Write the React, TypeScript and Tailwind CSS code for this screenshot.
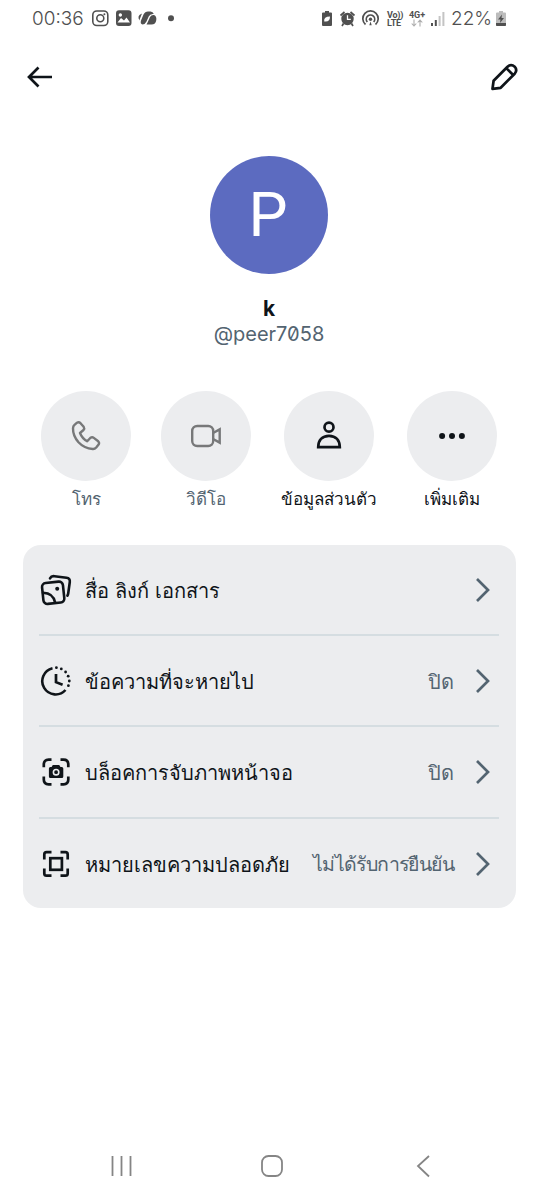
import type { ReactNode } from "react";

function PhoneIcon() {
  return (
    <svg width="32" height="32" viewBox="0 0 32 32" fill="none" stroke="#777879" strokeWidth="2.4" strokeLinejoin="round">
      <path d="M4.500 4.800 7 2.700Q8.900 1.600 10.500 3.200L13.700 6.800Q14.800 8.500 13.500 10L10 13Q12 18.200 17.200 21.300L20.500 17.800Q22.200 16.700 23.800 17.900L28.200 21.200Q29.700 22.800 28.600 24.500L26.200 27.500Q24.700 29.200 22.700 29Q14.300 28.500 8.500 22.300Q2.800 15.500 3 8.200Q3.100 6 4.500 4.800Z" />
    </svg>
  );
}

function VideoIcon() {
  return (
    <svg width="32" height="32" viewBox="0 0 32 32" fill="none" stroke="#777879" strokeWidth="2.4">
      <rect x="2.200" y="6" width="21" height="20" rx="5" />
      <path d="M23.500 12.800 29.700 9.400V22.600L23.500 19.200" />
    </svg>
  );
}

function PersonIcon() {
  return (
    <svg width="32" height="32" viewBox="0 0 32 32" fill="none" stroke="#0f1419" strokeWidth="2.7">
      <circle cx="16" cy="7.200" r="4.500" />
      <path d="M5.200 27.200C5.200 20.400 9.200 15.800 16 15.800S26.800 20.400 26.800 27.200Z" />
    </svg>
  );
}

function MoreIcon() {
  return (
    <svg width="32" height="32" viewBox="0 0 32 32" fill="#0f1419">
      <circle cx="6.100" cy="16" r="3" />
      <circle cx="16" cy="16" r="3" />
      <circle cx="25.900" cy="16" r="3" />
    </svg>
  );
}

function MediaIcon() {
  return (
    <svg width="32" height="32" viewBox="0 0 32 32" fill="none" stroke="#0f1419" strokeWidth="2.6" strokeLinecap="round">
      <rect x="2.700" y="8.300" width="21" height="21" rx="4" transform="rotate(-6 13 19)" />
      <path d="M3 18.800C10 19 14 22.500 15.200 28.800M10 4.300C11 2.400 12.500 1.900 14.500 2.200L26.500 3.800Q30.300 4.300 29.800 8L28.200 19.500Q28 20.800 27.400 21.600" />
      <circle cx="17.200" cy="14.700" r="2" fill="#0f1419" stroke="none" />
    </svg>
  );
}

function TimerIcon() {
  return (
    <svg width="32" height="32" viewBox="0 0 32 32" fill="none" stroke="#0f1419" strokeWidth="2.6">
      <path d="M12.500 3.200A13.300 13.300 0 1 0 25.500 25" />
      <path d="M16 9V17.200L22.600 19.800" strokeWidth="2.700" />
      <g fill="#0f1419" stroke="none">
        <circle cx="16.400" cy="2.700" r="1.400" />
        <circle cx="21.300" cy="3.900" r="1.400" />
        <circle cx="25.600" cy="7" r="1.400" />
        <circle cx="28.200" cy="11.200" r="1.400" />
        <circle cx="29.300" cy="16" r="1.400" />
        <circle cx="28.400" cy="20.700" r="1.400" />
      </g>
    </svg>
  );
}

function ScreenshotIcon() {
  return (
    <svg width="32" height="32" viewBox="0 0 32 32" fill="none" stroke="#0f1419" strokeWidth="2.7">
      <path d="M3.800 11.200V8.500Q3.800 3.700 8.600 3.700H11.500M20.500 3.700H23.500Q28.300 3.700 28.300 8.500V11.200M3.800 20.500V23.500Q3.800 28.300 8.600 28.300H11.500M20.500 28.300H23.500Q28.300 28.300 28.300 23.500V20.500" />
      <path
        d="M12.800 9H19.200L20.500 11H21.800Q23.300 11 23.300 12.500V20.500Q23.300 22 21.800 22H10.400Q8.900 22 8.900 20.500V12.500Q8.900 11 10.400 11H11.600Z"
        fill="#0f1419"
        stroke="none"
      />
      <circle cx="16.100" cy="16.200" r="2.700" stroke="#ecedef" strokeWidth="1.600" />
    </svg>
  );
}

function SafetyIcon() {
  return (
    <svg width="32" height="32" viewBox="0 0 32 32" fill="none" stroke="#0f1419" strokeWidth="2.7">
      <path d="M4.300 11.500V6.500Q4.300 4.200 6.600 4.200H11.500M20.500 4.200H25.400Q27.700 4.200 27.700 6.500V11.500M4.300 20.500V25.500Q4.300 27.700 6.600 27.700H11.500M20.500 27.700H25.400Q27.700 27.700 27.700 25.500V20.500" />
      <rect x="10.300" y="10.200" width="11.600" height="11.600" />
    </svg>
  );
}

function StatusBar() {
  return (
    <div className="flex h-[37px] items-center pt-px pr-[31px] pl-8 text-[#505050]">
      <span className="w-[53px] whitespace-nowrap text-[19px] font-light">00:36</span>
      <svg className="ml-[6px]" width="86" height="20" viewBox="0 0 86 20" fill="none" stroke="currentColor" strokeWidth="1.6">
        <rect x="1.800" y="2" width="15" height="14.500" rx="4" />
        <circle cx="9.300" cy="9.200" r="3.500" />
        <circle cx="13.400" cy="5.300" r="1" fill="currentColor" stroke="none" />
        <path
          d="M28 1.300H37.500Q40.500 1.300 40.500 4.300V14Q40.500 17 37.500 17H28Q25 17 25 14V4.300Q25 1.300 28 1.300ZM26.500 13.500H39L35.500 8.500 33 11.500 30 9ZM29.300 4.300A1.700 1.700 0 1 0 29.400 4.300Z"
          fill="currentColor"
          fillRule="evenodd"
          stroke="none"
        />
        <g fill="currentColor" stroke="none">
          <path d="M50 11.500 52.500 5.500Q54 2.500 57 2.500H59.500Q62 2.500 62.800 5Q59 4.500 57.700 7.500L55.500 12.500Q54 15.500 51.500 15.500Q49 15 50 11.500Z" />
          <path d="M57 12.500 59 8Q60.300 5.800 62.700 6Q65.800 6.800 65.300 11Q64.700 15.500 60.500 15.500H55.500Q56.400 14 57 12.500Z" />
          <path d="M48.500 11.500Q45.500 6.500 51 4.500L48.800 10Z" />
          <circle cx="80" cy="9.200" r="3" />
        </g>
      </svg>
      <div className="ml-auto flex items-center">
        <svg width="62" height="20" viewBox="0 0 62 20" fill="none" stroke="currentColor" strokeWidth="1.7">
          <path d="M4 2H8V3.500H10Q11 3.500 11 4.500V16Q11 17 10 17H2Q1 17 1 16V4.500Q1 3.500 2 3.500H4Z" fill="currentColor" stroke="none" />
          <path d="M3.200 12.500Q2.500 7.500 9 7.500Q9 13 4 12.500Z" fill="white" stroke="none" />
          <circle cx="26.500" cy="10" r="6.200" fill="currentColor" stroke="none" />
          <path d="M26.500 6.300V10.300H29.800" stroke="white" strokeWidth="1.3" />
          <path d="M19.500 6.500 23.500 3M29.500 3 33.500 6.500M22.500 14.500 21 17M30.500 14.500 32 17" />
          <path d="M44.500 15.500A7.700 7.700 0 1 1 54.500 15.500M46.300 13A4.200 4.200 0 1 1 52.700 13" />
          <circle cx="49.500" cy="10.200" r="1.700" fill="currentColor" stroke="none" />
          <path d="M48.300 16.200 49.500 12.500 50.700 16.200Z" fill="currentColor" stroke="none" />
        </svg>
        <div className="ml-[4px] flex w-[18px] flex-col whitespace-nowrap font-[Roboto] text-[9px] leading-[8px] font-bold tracking-[-0.2px]">
          <span>Vo))</span>
          <span>LTE</span>
        </div>
        <div className="ml-[3px] flex w-[18px] flex-col items-center font-[Roboto] text-[9px] leading-[8px] font-bold">
          <span>4G+</span>
          <svg width="12" height="8" viewBox="0 0 12 8" fill="none" stroke="#adadad" strokeWidth="1.1">
            <path d="M3 .5V7M.7 4.500 3 7 5.300 4.500M9 7.500V1M6.700 3.500 9 1 11.300 3.500" />
          </svg>
        </div>
        <svg className="ml-[4px]" width="16" height="16" viewBox="0 0 16 16">
          <path d="M1 12H3V15H1ZM4.800 9H6.800V15H4.800Z" fill="#505050" />
          <path d="M8.600 5H10.600V15H8.600ZM12.400 1H14.400V15H12.400Z" fill="#c4c4c4" />
        </svg>
        <span className="ml-[5px] w-[42px] whitespace-nowrap text-[19px] font-light">22%</span>
        <svg className="ml-[2px]" width="12" height="18" viewBox="0 0 12 18">
          <path d="M4 1H8V2.500H10Q11 2.500 11 3.500V16H1V3.500Q1 2.500 2 2.500H4Z" fill="#bcbcbc" />
          <path d="M1 13H11V15Q11 16 10 16H2Q1 16 1 15ZM7 4.500 3 9.500H5.500L5 13 9 8H6.500Z" fill="#505050" />
        </svg>
      </div>
    </div>
  );
}

type ActionProps = {
  label: string;
  icon: ReactNode;
  className?: string;
};

function Action({ label, icon, className = "text-[#0f1419]" }: ActionProps) {
  return (
    <div className="flex w-[90px] flex-col items-center">
      <button className="flex size-[90px] items-center justify-center rounded-full bg-[#ecedef]">{icon}</button>
      <span className={`mt-1 font-['Waree','DejaVu_Sans',sans-serif] text-[17px] leading-7 whitespace-nowrap ${className}`}>
        {label}
      </span>
    </div>
  );
}

const rows = [
  { label: "สื่อ ลิงก์ เอกสาร", value: "", icon: <MediaIcon /> },
  { label: "ข้อความที่จะหายไป", value: "ปิด", icon: <TimerIcon /> },
  { label: "บล็อคการจับภาพหน้าจอ", value: "ปิด", icon: <ScreenshotIcon /> },
  { label: "หมายเลขความปลอดภัย", value: "ไม่ได้รับการยืนยัน", icon: <SafetyIcon /> },
];

export default function App() {
  return (
    <div className="flex h-[1200px] w-[538px] flex-col bg-white font-['Inter','Noto_Sans',sans-serif] text-[#0f1419]">
      <StatusBar />

      <header className="flex h-20 items-center justify-between pr-[19px] pl-[26px]">
        <svg width="28" height="28" viewBox="0 0 28 28" fill="none" stroke="#0f1419" strokeWidth="2.7">
          <path d="M26 14H3M12.500 4.500 3 14 12.500 23.500" />
        </svg>
        <svg width="30" height="30" viewBox="0 0 30 30" fill="none" stroke="#0f1419" strokeWidth="2.7" strokeLinejoin="round">
          <path d="M3.500 26.800 4.600 18.800 18.500 4.700Q22.200 1.500 25.700 4.700Q28.700 8.200 25.700 11.700L11.700 25.800ZM17.300 6.100 24.200 13" />
        </svg>
      </header>

      {/* Profile */}
      <section className="mt-[38.5px] flex flex-col items-center">
        <div className="flex size-[118px] items-center justify-center rounded-full bg-[#5c6bc0] pr-0.5 font-[Roboto] text-[62px] leading-none text-white">
          P
        </div>
        <h1 className="mt-[22px] text-[21px] leading-[26px] font-bold">k</h1>
        <p className="-mt-px text-[20px] leading-[26px] whitespace-nowrap text-[#536471] slashed-zero">@peer7058</p>
      </section>

      <div className="mt-[44.5px] flex pl-[41px]">
        <Action label="โทร" icon={<PhoneIcon />} className="text-[#536471]" />
        <div className="ml-[30px]">
          <Action label="วิดีโอ" icon={<VideoIcon />} className="text-[#536471]" />
        </div>
        <div className="ml-[33px]">
          <Action label="ข้อมูลส่วนตัว" icon={<PersonIcon />} />
        </div>
        <div className="ml-[33px]">
          <Action label="เพิ่มเติม" icon={<MoreIcon />} />
        </div>
      </div>

      {/* Settings */}
      <section className="mr-[22px] ml-[22.5px] mt-8 h-[363px] rounded-[18px] bg-[#ecedef] pr-[17px] pl-[16.5px]">
        {rows.map((row) => (
          <div
            key={row.label}
            className="flex h-[91.2px] items-center border-b-2 border-[#d5dde1] font-['Waree','DejaVu_Sans',sans-serif] text-[20px] leading-8 last:border-b-0"
          >
            <div className="ml-px">{row.icon}</div>
            <span className="ml-[12.5px] pt-0.5 whitespace-nowrap">{row.label}</span>
            <span
              className={`ml-auto pt-0.5 whitespace-nowrap text-[#536471] ${
                row.value.length > 5 ? "text-[19.5px] tracking-[-0.6px]" : ""
              }`}
            >
              {row.value}
            </span>
            <svg className="mr-[7px] ml-[20px]" width="18" height="28" viewBox="0 0 18 28" fill="none" stroke="#536471" strokeWidth="2.7">
              <path d="M3 3 14 14 3 25" />
            </svg>
          </div>
        ))}
      </section>

      <nav className="mt-auto flex h-[68px] items-center pl-[110px]">
        <svg width="24" height="24" viewBox="0 0 24 24" stroke="#858585" strokeWidth="1.8">
          <path d="M2.500 2V22M11.500 2V22M20.500 2V22" />
        </svg>
        <svg className="ml-[126px]" width="24" height="24" viewBox="0 0 24 24" fill="none" stroke="#858585" strokeWidth="1.8">
          <rect x="2" y="2" width="20" height="20" rx="6.500" />
        </svg>
        <svg className="ml-[132px]" width="14" height="24" viewBox="0 0 14 24" fill="none" stroke="#858585" strokeWidth="1.8">
          <path d="M13 2 2 12 13 22.500" />
        </svg>
      </nav>
    </div>
  );
}
